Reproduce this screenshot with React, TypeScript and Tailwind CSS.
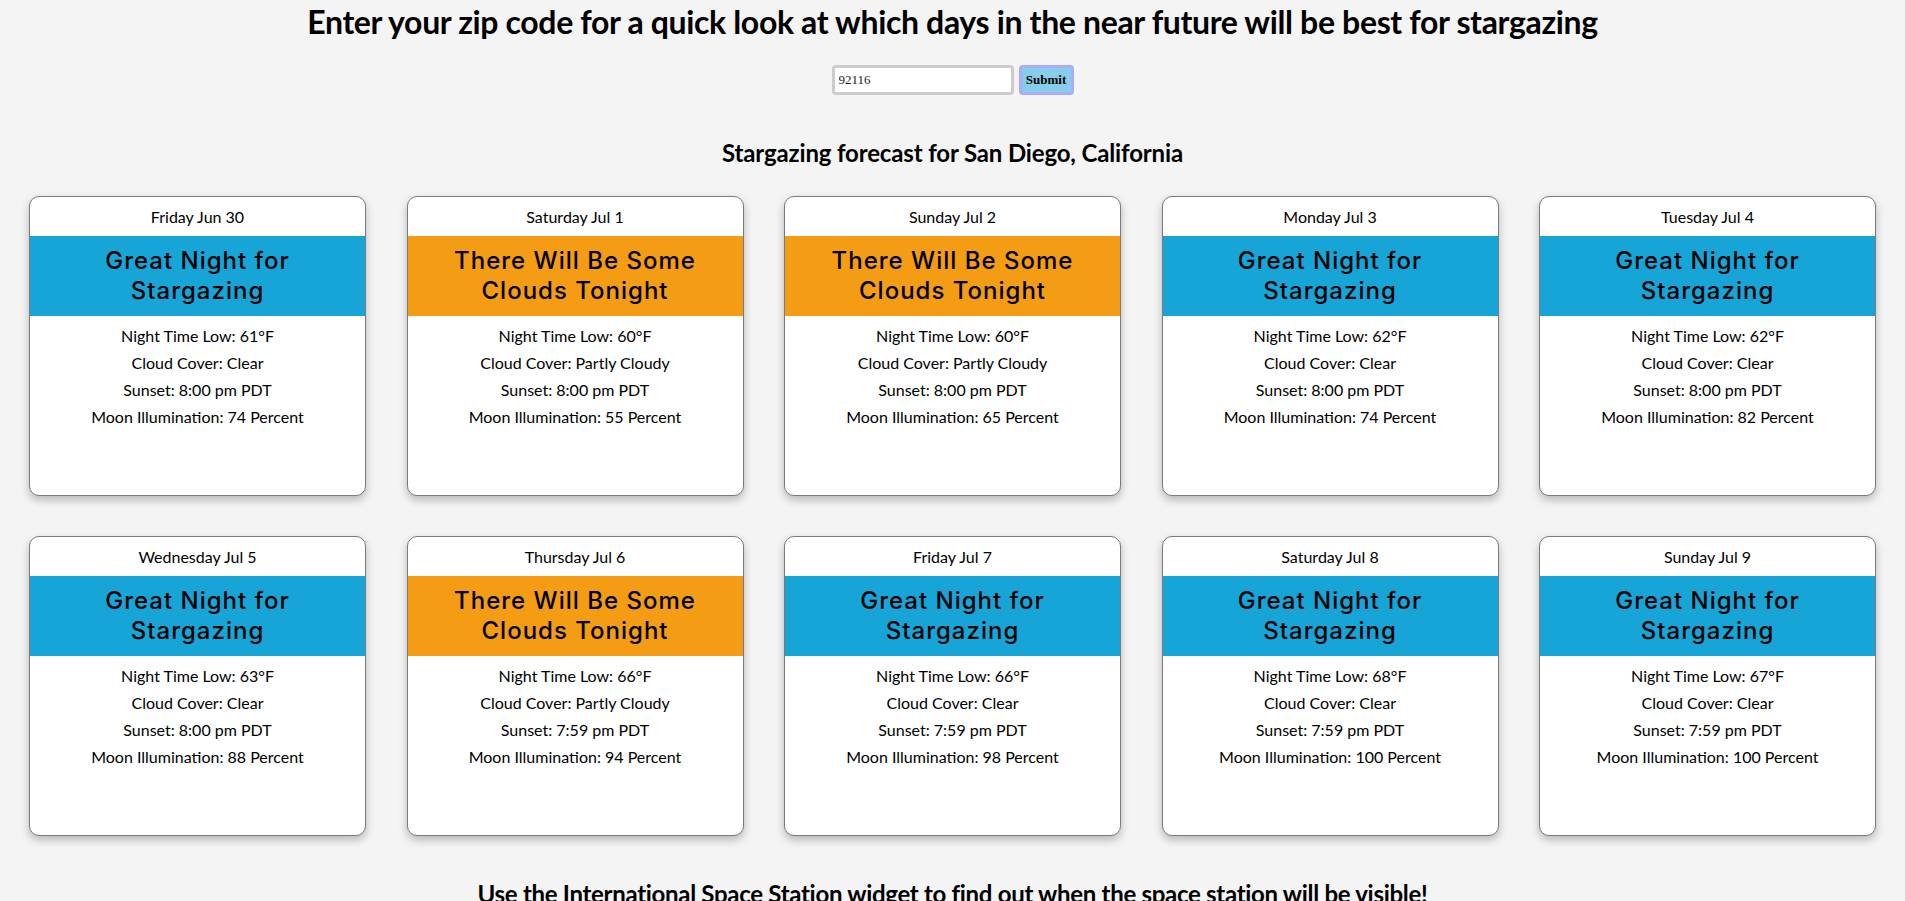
import React from 'react';

// ────────────────────────────────────────────────────────────────
// Data
// ────────────────────────────────────────────────────────────────
interface Day {
  date: string;
  good: boolean;
  low: number;
  cloud: string;
  sunset: string;
  moon: number;
}

const DAYS: Day[] = [
  { date: 'Friday Jun 30', good: true, low: 61, cloud: 'Clear', sunset: '8:00 pm PDT', moon: 74 },
  { date: 'Saturday Jul 1', good: false, low: 60, cloud: 'Partly Cloudy', sunset: '8:00 pm PDT', moon: 55 },
  { date: 'Sunday Jul 2', good: false, low: 60, cloud: 'Partly Cloudy', sunset: '8:00 pm PDT', moon: 65 },
  { date: 'Monday Jul 3', good: true, low: 62, cloud: 'Clear', sunset: '8:00 pm PDT', moon: 74 },
  { date: 'Tuesday Jul 4', good: true, low: 62, cloud: 'Clear', sunset: '8:00 pm PDT', moon: 82 },
  { date: 'Wednesday Jul 5', good: true, low: 63, cloud: 'Clear', sunset: '8:00 pm PDT', moon: 88 },
  { date: 'Thursday Jul 6', good: false, low: 66, cloud: 'Partly Cloudy', sunset: '7:59 pm PDT', moon: 94 },
  { date: 'Friday Jul 7', good: true, low: 66, cloud: 'Clear', sunset: '7:59 pm PDT', moon: 98 },
  { date: 'Saturday Jul 8', good: true, low: 68, cloud: 'Clear', sunset: '7:59 pm PDT', moon: 100 },
  { date: 'Sunday Jul 9', good: true, low: 67, cloud: 'Clear', sunset: '7:59 pm PDT', moon: 100 },
];

// ────────────────────────────────────────────────────────────────
// Forecast card
// ────────────────────────────────────────────────────────────────
function DayCard({ day }: { day: Day }) {
  return (
    <div className="w-[337px] h-[300px] bg-white border border-[#7a7a7a] rounded-[10px] overflow-hidden shadow-[0_4px_8px_rgba(0,0,0,0.25)] text-center">
      <div className="h-[39px] flex items-center justify-center text-[16px]">{day.date}</div>
      <div
        className={`h-[80px] flex items-center justify-center px-6 font-['Inter',sans-serif] font-medium text-[24px] leading-[30px] tracking-[1px] ${
          day.good ? 'bg-[#17a5d8]' : 'bg-[#f39c14]'
        }`}
      >
        {day.good ? 'Great Night for Stargazing' : 'There Will Be Some Clouds Tonight'}
      </div>
      <div className="pt-[6px] text-[16px] leading-[27px]">
        <p>Night Time Low: {day.low}°F</p>
        <p>Cloud Cover: {day.cloud}</p>
        <p>Sunset: {day.sunset}</p>
        <p>Moon Illumination: {day.moon} Percent</p>
      </div>
    </div>
  );
}

export default function App() {
  return (
    <div className="min-h-screen bg-[#f4f4f4] text-black font-['Lato',sans-serif] pb-10">
      <h1 className="pt-[3px] text-center text-[32px] leading-[38px] font-bold tracking-[-0.35px]">
        Enter your zip code for a quick look at which days in the near future will be best for stargazing
      </h1>

      {/* Zip form */}
      <div className="mt-[24px] flex justify-center gap-[5px]">
        <input
          defaultValue="92116"
          className="w-[182px] h-[30px] bg-white border-[3px] border-[#cccccc] rounded-[4px] px-[4px] font-['Liberation_Serif',serif] text-[13px] text-[#222] outline-none"
        />
        <button className="w-[55px] h-[30px] bg-[#87ceeb] border-[3px] border-[#aaaaff] rounded-[4px] font-['Liberation_Serif',serif] text-[13px] font-bold">
          Submit
        </button>
      </div>

      <h2 className="mt-[43px] text-center text-[24px] leading-[29px] font-bold tracking-[-0.15px]">
        Stargazing forecast for San Diego, California
      </h2>

      {/* Cards */}
      <div className="mt-[29px] px-[29px] flex flex-wrap justify-between gap-y-[40px]">
        {DAYS.map((d) => (
          <DayCard key={d.date} day={d} />
        ))}
      </div>

      <h2 className="mt-[43px] text-center text-[24px] leading-[29px] font-bold tracking-[-0.3px]">
        Use the International Space Station widget to find out when the space station will be visible!
      </h2>
    </div>
  );
}
